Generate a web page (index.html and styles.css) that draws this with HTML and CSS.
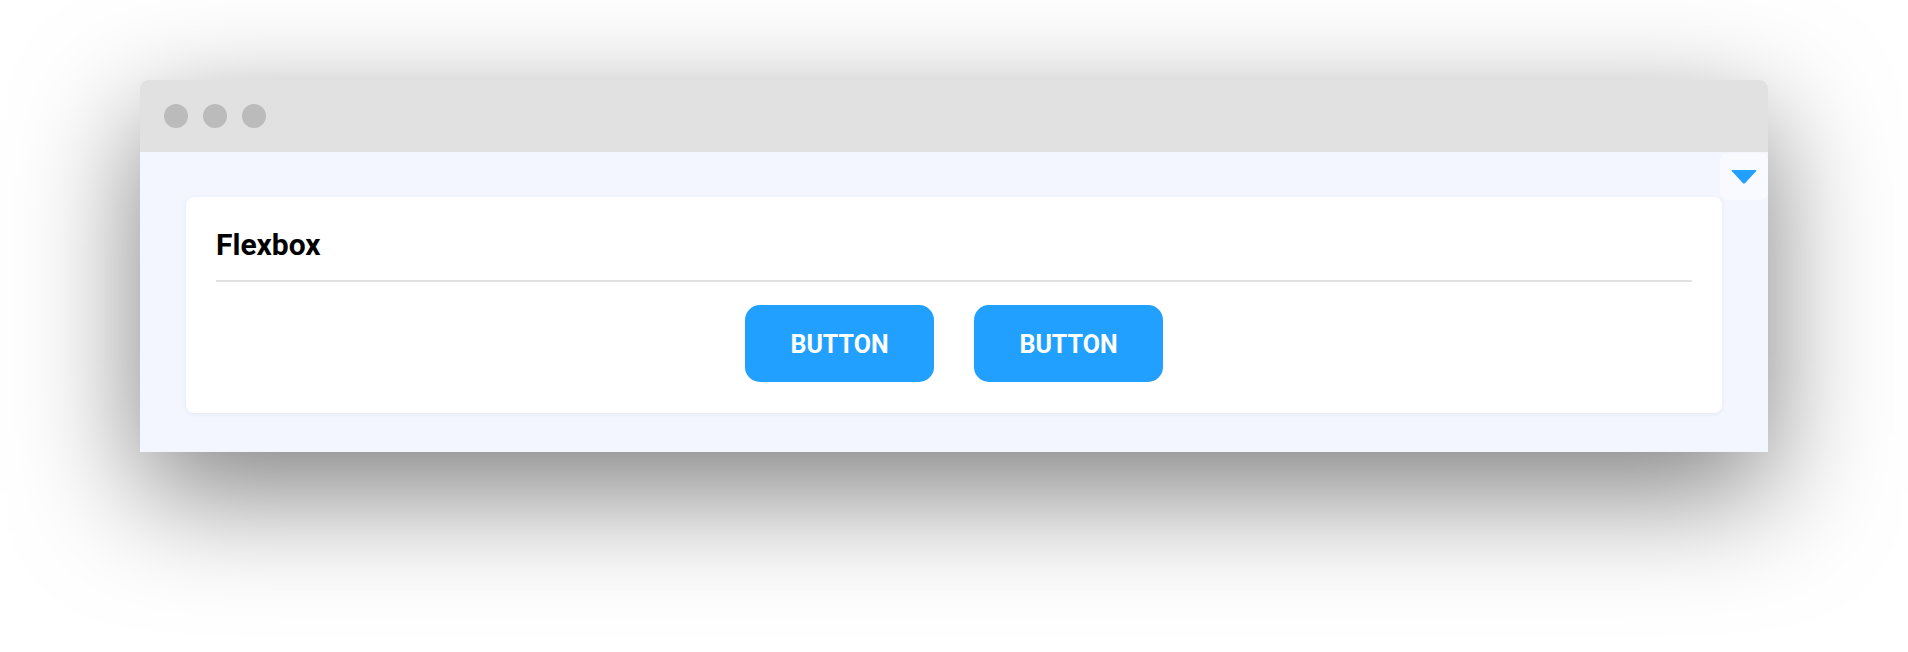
FILE: index.html
```html
<!doctype html>
<html>
  <head>
    <title>Flexbox</title>
    <link rel="stylesheet" href="styles.css">
  </head>
  <body>
    <div class='window'>
      <div class='title-bar'>
        <span class='dot'></span>
        <span class='dot'></span>
        <span class='dot'></span>
      </div>
      <div class='content'>
        <div class='toggle'>
          <svg width="26" height="14" viewBox="0 0 26 14">
            <path d="M1.5 0 H24.5 Q26 0 25 1.2 L14.2 13 Q13 14.2 11.8 13 L1 1.2 Q0 0 1.5 0 Z" fill="#22a0ff"/>
          </svg>
        </div>
        <div class='card'>
          <h2 class='card-title'>Flexbox</h2>
          <div class='button-row'>
            <button class='btn'>BUTTON</button>
            <button class='btn'>BUTTON</button>
          </div>
        </div>
      </div>
    </div>
  </body>
</html>
```

FILE: styles.css
```css
html, body {
  margin: 0;
  background: #fff;
}

body {
  box-sizing: border-box;
  min-height: 100vh;
  padding: 80px 140px;
  font-family: Roboto, "Liberation Sans", sans-serif;
}

/* window frame */
.window {
  border-radius: 8px 8px 0 0;
  box-shadow: 0 40px 120px rgba(0, 0, 0, 0.5);
}

.title-bar {
  height: 72px;
  background: #e1e1e1;
  border-radius: 8px 8px 0 0;
  display: flex;
  align-items: center;
  padding-left: 24px;
  gap: 15px;
}

.dot {
  width: 24px;
  height: 24px;
  border-radius: 50%;
  background: #bbbbbb;
}

.content {
  position: relative;
  background: #f3f6fe;
  padding: 45px 46px 39px;
}

/* top right dropdown toggle */
.toggle {
  position: absolute;
  top: 1px;
  right: 0;
  width: 48px;
  height: 47px;
  background: #f8faff;
  border-radius: 8px;
  display: flex;
  align-items: center;
  justify-content: center;
}

/* card */
.card {
  background: #fff;
  border-radius: 8px;
  box-shadow: 0 1px 4px rgba(40, 60, 120, 0.08);
  padding: 30px 30px 31px;
}

.card-title {
  margin: 0;
  font-size: 30px;
  font-weight: 700;
  line-height: 35px;
  color: #000;
  padding-bottom: 18px;
  border-bottom: 2px solid #e2e2e2;
}

.button-row {
  display: flex;
  justify-content: center;
  gap: 40px;
  padding-top: 23px;
}

.btn {
  width: 189px;
  height: 77px;
  padding: 2px 0 0;
  border: none;
  border-radius: 15px;
  background: #22a0ff;
  color: #fff;
  font-family: Roboto, "Liberation Sans", sans-serif;
  font-size: 25px;
  font-weight: 700;
}
```
